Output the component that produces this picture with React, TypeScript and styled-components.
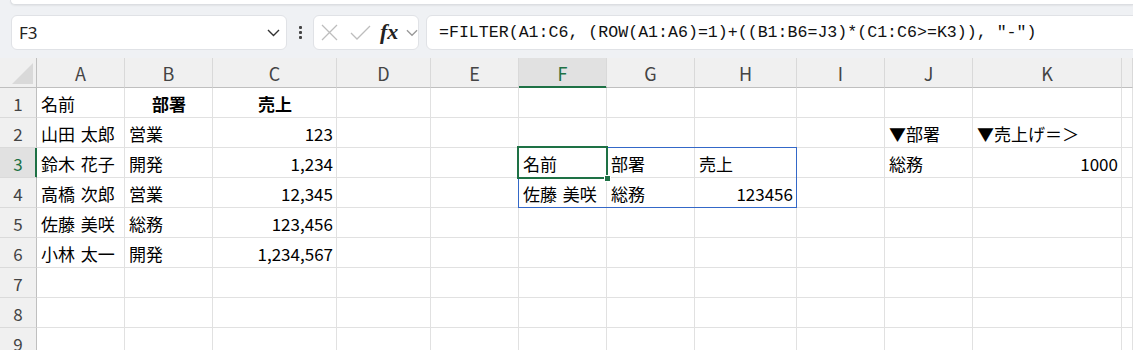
import React from "react";
import styled, { createGlobalStyle, css } from "styled-components";

const GlobalStyle = createGlobalStyle`
  html, body { margin: 0; padding: 0; background: #fff; overflow: hidden; }
  body { font-family: "Noto Sans", "Noto Sans CJK JP", sans-serif; }
`;

const Page = styled.div`
  width: 1133px;
  height: 350px;
  overflow: hidden;
  background: #eff1f4;
  display: flex;
  flex-direction: column;
  & > * {
    flex-shrink: 0;
  }
`;

const Ribbon = styled.div`
  height: 4px;
  margin-left: 10px;
  background: #fff;
  border: 1px solid #dcdee2;
  border-top: none;
  border-right: none;
  border-bottom-left-radius: 8px;
  box-shadow: 0 1px 2px rgba(0, 0, 0, 0.06);
`;

const FormulaRow = styled.div`
  display: flex;
  align-items: center;
  height: 35px;
  margin: 10px 0 8px;
  padding-left: 11px;
`;

const Box = styled.div`
  box-sizing: border-box;
  height: 35px;
  background: #fff;
  border: 1px solid #e0e2e6;
  border-radius: 6px;
  display: flex;
  align-items: center;
`;

const NameBox = styled(Box)`
  width: 276px;
  justify-content: space-between;
  padding: 0 6px 0 7px;
  font-size: 17px;
  color: #222;
`;

const Dots = styled.div`
  width: 26px;
  display: flex;
  flex-direction: column;
  align-items: center;
  gap: 2px;
  span {
    width: 3px;
    height: 3px;
    border-radius: 1px;
    background: #444;
  }
`;

const FxBox = styled(Box)`
  width: 106px;
  padding: 0 0 0 7px;
  gap: 0;
`;

const IconSlot = styled.div<{ $w: number }>`
  width: ${(p) => p.$w}px;
  display: flex;
  align-items: center;
  justify-content: flex-start;
`;

const Fx = styled.span`
  font-family: "Liberation Serif", serif;
  font-style: italic;
  font-weight: bold;
  font-size: 22px;
  color: #222;
  line-height: 1;
  margin-top: -2px;
`;

const FormulaBox = styled(Box)`
  flex: 1;
  margin-left: 7px;
  margin-right: -12px;
  padding-left: 12px;
  font-family: "Liberation Mono", "DejaVu Sans Mono", monospace;
  font-size: 16.6px;
  color: #111;
  white-space: pre;
`;

const Sheet = styled.div`
  position: relative;
  display: grid;
  grid-template-columns: 37px 88px 88px 124px 94px 88px 88px 88px 102px 88px 88px 149px 1fr;
  grid-auto-rows: 30px;
  background: #fff;
`;

const headerBase = css`
  box-sizing: border-box;
  background: #f0f0f0;
  display: flex;
  align-items: center;
  justify-content: center;
  font-family: "Noto Sans CJK JP", "Noto Sans", sans-serif;
  font-size: 17px;
  color: #444;
`;

const Corner = styled.div`
  ${headerBase};
  position: relative;
  border-right: 1px solid #bfbfbf;
  border-bottom: 1px solid #bfbfbf;
  &::after {
    content: "";
    position: absolute;
    right: 3px;
    bottom: 3px;
    width: 21px;
    height: 21px;
    background: #d9d9d9;
    clip-path: polygon(100% 0, 100% 100%, 0 100%);
  }
`;

const ColHeader = styled.div<{ $selected?: boolean }>`
  ${headerBase};
  font-size: 18px;
  border-right: 1px solid #d9d9d9;
  border-bottom: 1px solid #bfbfbf;
  ${(p) =>
    p.$selected &&
    css`
      background: #e1e1e1;
      color: #1e7145;
      border-bottom-color: #1e7145;
      box-shadow: inset 0 -1px 0 #1e7145;
    `}
`;

const RowHeader = styled.div<{ $selected?: boolean }>`
  ${headerBase};
  border-right: 1px solid #bfbfbf;
  border-bottom: 1px solid #dadada;
  padding-top: 1px;
  ${(p) =>
    p.$selected &&
    css`
      background: #e1e1e1;
      color: #1e7145;
      border-right-color: #1e7145;
      box-shadow: inset -1px 0 0 #1e7145;
    `}
`;

const Cell = styled.div<{ $align?: "left" | "right" | "center"; $bold?: boolean }>`
  box-sizing: border-box;
  border-right: 1px solid #e1e1e1;
  border-bottom: 1px solid #e1e1e1;
  display: flex;
  align-items: center;
  justify-content: ${(p) =>
    p.$align === "right" ? "flex-end" : p.$align === "center" ? "center" : "flex-start"};
  padding: 2px 3px 0 4px;
  font-family: "Noto Sans CJK JP", sans-serif;
  font-size: 17px;
  font-weight: ${(p) => (p.$bold ? 700 : 400)};
  word-spacing: 2px;
  color: #000;
  white-space: nowrap;
`;

const Spill = styled.div`
  position: absolute;
  grid-column: 7 / 10;
  grid-row: 4 / 6;
  top: -1px;
  left: -1px;
  right: 0;
  bottom: 0;
  border: 1px solid #3468c8;
  pointer-events: none;
`;

const Active = styled.div`
  position: absolute;
  grid-column: 7 / 8;
  grid-row: 4 / 5;
  top: -2px;
  left: -2px;
  right: -1px;
  bottom: -1px;
  border: 2px solid #1e7145;
  pointer-events: none;
  &::after {
    content: "";
    position: absolute;
    right: -5px;
    bottom: -5px;
    width: 5px;
    height: 5px;
    background: #1e7145;
    border: 1px solid #fff;
  }
`;

type CellData = { t: string; a?: "left" | "right" | "center"; b?: boolean };

const COLS = ["A", "B", "C", "D", "E", "F", "G", "H", "I", "J", "K", ""];

const DATA: Record<number, Record<number, CellData>> = {
  1: { 0: { t: "名前" }, 1: { t: "部署", a: "center", b: true }, 2: { t: "売上", a: "center", b: true } },
  2: {
    0: { t: "山田 太郎" },
    1: { t: "営業" },
    2: { t: "123", a: "right" },
    9: { t: "▼部署" },
    10: { t: "▼売上げ＝＞" },
  },
  3: {
    0: { t: "鈴木 花子" },
    1: { t: "開発" },
    2: { t: "1,234", a: "right" },
    5: { t: "名前" },
    6: { t: "部署" },
    7: { t: "売上" },
    9: { t: "総務" },
    10: { t: "1000", a: "right" },
  },
  4: {
    0: { t: "高橋 次郎" },
    1: { t: "営業" },
    2: { t: "12,345", a: "right" },
    5: { t: "佐藤 美咲" },
    6: { t: "総務" },
    7: { t: "123456", a: "right" },
  },
  5: { 0: { t: "佐藤 美咲" }, 1: { t: "総務" }, 2: { t: "123,456", a: "right" } },
  6: { 0: { t: "小林 太一" }, 1: { t: "開発" }, 2: { t: "1,234,567", a: "right" } },
};

const Chevron = ({ color = "#333", w = 13 }: { color?: string; w?: number }) => (
  <svg width={w} height={8} viewBox="0 0 13 8">
    <polyline points="1,1 6.5,6.5 12,1" fill="none" stroke={color} strokeWidth={1.4} />
  </svg>
);

export default function App() {
  return (
    <>
      <GlobalStyle />
      <Page>
        <Ribbon />
        <FormulaRow>
          <NameBox>
            <span>F3</span>
            <Chevron />
          </NameBox>
          <Dots>
            <span />
            <span />
            <span />
          </Dots>
          <FxBox>
            <IconSlot $w={29}>
              <svg width={17} height={17} viewBox="0 0 17 17">
                <path d="M1 1 L16 16 M16 1 L1 16" stroke="#bdbdbd" strokeWidth={1.3} fill="none" />
              </svg>
            </IconSlot>
            <IconSlot $w={30}>
              <svg width={21} height={16} viewBox="0 0 21 16">
                <polyline points="1,8 7,14 20,1" stroke="#bdbdbd" strokeWidth={1.3} fill="none" />
              </svg>
            </IconSlot>
            <IconSlot $w={26}>
              <Fx>fx</Fx>
            </IconSlot>
            <Chevron color="#999" w={12} />
          </FxBox>
          <FormulaBox>{'=FILTER(A1:C6, (ROW(A1:A6)=1)+((B1:B6=J3)*(C1:C6>=K3)), "-")'}</FormulaBox>
        </FormulaRow>
        <Sheet>
          <Corner />
          {COLS.map((c, i) => (
            <ColHeader key={"h" + i} $selected={c === "F"}>
              {c}
            </ColHeader>
          ))}
          {Array.from({ length: 9 }, (_, r) => r + 1).map((r) => (
            <React.Fragment key={"r" + r}>
              <RowHeader $selected={r === 3}>{r}</RowHeader>
              {COLS.map((_, ci) => {
                const d = DATA[r]?.[ci];
                return (
                  <Cell key={ci} $align={d?.a} $bold={d?.b}>
                    {d?.t ?? ""}
                  </Cell>
                );
              })}
            </React.Fragment>
          ))}
          <Spill />
          <Active />
        </Sheet>
      </Page>
    </>
  );
}
